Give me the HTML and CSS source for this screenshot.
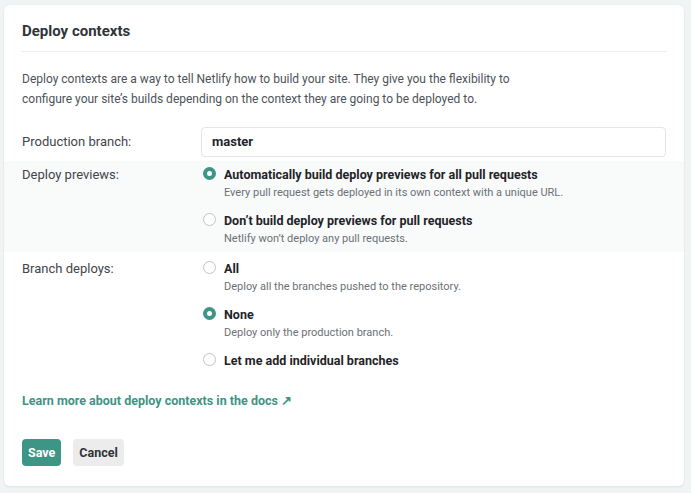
FILE: index.html
```html
<!DOCTYPE html>
<html>
<head>
  <title>Deploy contexts</title>
  <link rel="stylesheet" href="styles.css">
</head>
<body>

<div class="card">
  <h2>Deploy contexts</h2>
  <p class="intro">Deploy contexts are a way to tell Netlify how to build your site. They give you the flexibility to configure your site’s builds depending on the context they are going to be deployed to.</p>

  <div class="row row-branch">
    <div class="label">Production branch:</div>
    <div class="control">
      <div class="input">master</div>
    </div>
  </div>

  <div class="row shaded">
    <div class="label">Deploy previews:</div>
    <div class="control">
      <div class="option">
        <span class="radio checked"></span>
        <div>
          <div class="opt-title">Automatically build deploy previews for all pull requests</div>
          <div class="opt-desc">Every pull request gets deployed in its own context with a unique URL.</div>
        </div>
      </div>
      <div class="option">
        <span class="radio"></span>
        <div>
          <div class="opt-title">Don’t build deploy previews for pull requests</div>
          <div class="opt-desc">Netlify won’t deploy any pull requests.</div>
        </div>
      </div>
    </div>
  </div>

  <div class="row row-deploys">
    <div class="label">Branch deploys:</div>
    <div class="control">
      <div class="option">
        <span class="radio"></span>
        <div>
          <div class="opt-title">All</div>
          <div class="opt-desc">Deploy all the branches pushed to the repository.</div>
        </div>
      </div>
      <div class="option">
        <span class="radio checked"></span>
        <div>
          <div class="opt-title">None</div>
          <div class="opt-desc">Deploy only the production branch.</div>
        </div>
      </div>
      <div class="option">
        <span class="radio"></span>
        <div>
          <div class="opt-title">Let me add individual branches</div>
        </div>
      </div>
    </div>
  </div>

  <a class="docs" href="#">Learn more about deploy contexts in the docs ↗</a>

  <div class="actions">
    <button class="btn save">Save</button>
    <button class="btn cancel">Cancel</button>
  </div>
</div>

</body>
</html>
```

FILE: styles.css
```css
body {
  margin: 0;
  padding: 5px 7px 5px 4px;
  background-color: #f1f4f4;
  font-family: Roboto, "Liberation Sans", sans-serif;
  color: #2f3438;
}
.card {
  background-color: #fff;
  border-radius: 6px;
  box-shadow: 0 1px 3px rgba(0, 0, 0, 0.08);
  padding: 14px 0 20px;
}
h2 {
  margin: 0 18px;
  padding: 3px 0 11px;
  font-size: 15px;
  font-weight: 700;
  border-bottom: 1px solid #eceeee;
}
.intro {
  margin: 17px 18px 18px;
  font-size: 12px;
  line-height: 20px;
  color: #4d5358;
  max-width: 510px;
}
.row {
  display: flex;
  padding: 0 18px;
}
.row-branch {
  padding-bottom: 4px;
}
.shaded {
  background-color: #f9fafa;
}
.shaded .label {
  padding-top: 6px;
}
.shaded .option:last-child {
  margin-bottom: 1px;
}
.row-deploys {
  padding-top: 4px;
}
.label {
  width: 179px;
  flex-shrink: 0;
  font-size: 13px;
  color: #3f454a;
  padding-top: 5px;
}
.row-branch .label {
  padding-top: 7px;
}
.control {
  flex: 1;
}
.input {
  height: 28px;
  border: 1px solid #e3e6e7;
  border-radius: 4px;
  padding: 0 10px;
  line-height: 28px;
  font-size: 13px;
  font-weight: 700;
  color: #1f2428;
}
.option {
  display: flex;
  gap: 8px;
  padding: 5px 0 5px 2px;
  margin-bottom: 3px;
}
.shaded .option:first-child {
  padding-top: 6px;
}
.radio {
  width: 11px;
  height: 11px;
  border: 1.5px solid #bfc4c6;
  border-radius: 50%;
  background: #fff;
  flex-shrink: 0;
}
.radio.checked {
  border: 4.5px solid #3d9585;
  width: 5px;
  height: 5px;
}
.opt-title {
  font-size: 12.5px;
  font-weight: 700;
  color: #1f2428;
  line-height: 16px;
}
.opt-desc {
  font-size: 11px;
  color: #6b7176;
  margin-top: 3px;
  line-height: 14px;
}
.docs {
  display: inline-block;
  margin: 16px 18px 0;
  font-size: 12.5px;
  font-weight: 700;
  color: #3d9585;
  text-decoration: none;
}
.actions {
  display: flex;
  gap: 12px;
  margin: 30px 18px 0;
}
.btn {
  height: 27px;
  border: none;
  border-radius: 4px;
  padding: 0 6px;
  font-family: Roboto, "Liberation Sans", sans-serif;
  font-size: 12.5px;
  font-weight: 700;
}
.save {
  background-color: #3d9585;
  color: #fff;
}
.cancel {
  background-color: #ececec;
  color: #2f3438;
}
```
